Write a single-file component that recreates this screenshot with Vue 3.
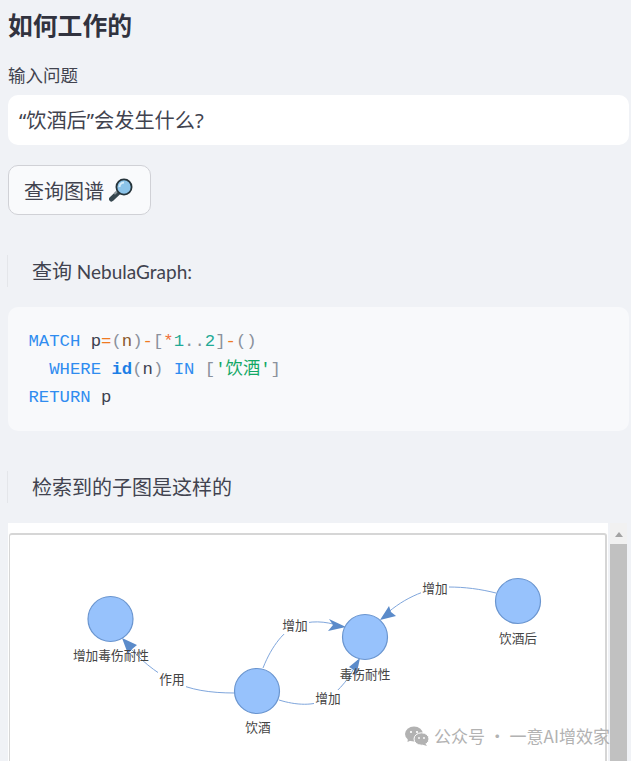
<template>
  <div class="page">
    <h2 class="title">如何工作的</h2>
    <label class="field-label">输入问题</label>
    <div class="input">“饮酒后”会发生什么?</div>
    <button class="query-btn">
      <span>查询图谱</span>
      <svg class="lens" width="24" height="24" viewBox="0 0 24 24">
        <path d="M11 13 L2.5 21" stroke="#37474f" stroke-width="5" stroke-linecap="round" />
        <path d="M9.5 12 L6 15.5" stroke="#8a9499" stroke-width="2" stroke-linecap="round" />
        <circle cx="15" cy="9" r="7.6" fill="#8cc4ea" stroke="#26343b" stroke-width="1.8" />
        <path d="M10.5 9 A4.6 4.6 0 0 1 15 4.5" fill="none" stroke="#d5ecfa" stroke-width="2" />
      </svg>
    </button>

    <blockquote class="quote first"><span class="big">查询</span> NebulaGraph:</blockquote>

    <pre class="code"><code><span class="kw">MATCH</span> <span class="id">p</span><span class="op">=</span><span class="pn">(</span><span class="id2">n</span><span class="pn">)</span><span class="op">-</span><span class="pn">[</span><span class="star">*</span><span class="num">1</span><span class="pn">..</span><span class="num">2</span><span class="pn">]</span><span class="op">-</span><span class="pn">()</span>
  <span class="kw">WHERE</span> <span class="fn">id</span><span class="pn">(</span><span class="id">n</span><span class="pn">)</span> <span class="kw">IN</span> <span class="pn">[</span><span class="str">'饮酒'</span><span class="pn">]</span>
<span class="kw">RETURN</span> <span class="id">p</span></code></pre>

    <blockquote class="quote second">检索到的子图是这样的</blockquote>

    <div class="frame">
      <div class="graph-wrap">
        <div class="graph-box">
          <svg class="graph" width="598" height="240" viewBox="9 534 598 240">
            <g fill="none" stroke="#7fa6dc" stroke-width="1">
              <path d="M235 693 C210 693 190 690 172 681 C155 672 140 660 125 642" />
              <path d="M263 668 C272 645 285 630 296 626 C310 620 325 621 340 626" />
              <path d="M279 700 C295 705 315 707 328 698 C340 690 350 678 358 660" />
              <path d="M496 593 C480 589 465 587 448 587 C425 588 400 600 382 618" />
            </g>
            <g fill="#5b8bca">
              <polygon points="122,638 137,645 131,650 128,654" />
              <polygon points="346,627 329,619 333,625 328,631" />
              <polygon points="360,658 349,667 354,670 356,677" />
              <polygon points="380,620 389,606 391,612 396,616" />
            </g>
            <g fill="#97c2fc" stroke="#6a95cf" stroke-width="1.2">
              <circle cx="110.500" cy="619" r="22.500" />
              <circle cx="257" cy="691" r="22.500" />
              <circle cx="365" cy="637" r="22.500" />
              <circle cx="518" cy="601" r="22.500" />
            </g>
            <g class="node-text" text-anchor="middle">
              <text x="111" y="660">增加毒伤耐性</text>
              <text x="258" y="732">饮酒</text>
              <text x="365" y="679">毒伤耐性</text>
              <text x="518" y="643">饮酒后</text>
            </g>
            <g class="edge-text" text-anchor="middle">
              <rect x="158" y="672" width="28" height="16" fill="#fff" />
              <text x="172" y="684">作用</text>
              <rect x="281" y="618" width="28" height="16" fill="#fff" />
              <text x="295" y="630">增加</text>
              <rect x="314" y="690" width="28" height="16" fill="#fff" />
              <text x="328" y="703">增加</text>
              <rect x="421" y="580" width="28" height="16" fill="#fff" />
              <text x="435" y="593">增加</text>
            </g>
          </svg>
        </div>
      </div>
      <div class="scrollbar">
        <div class="arrow"></div>
        <div class="thumb"></div>
      </div>
    </div>

    <div class="watermark">
      <svg width="24" height="20" viewBox="0 0 24 20">
        <ellipse cx="9" cy="8" rx="9" ry="7.500" fill="#b2b2b2" />
        <path d="M3 12 L2.500 16 L7 14z" fill="#b2b2b2" />
        <ellipse cx="16.500" cy="13" rx="7.500" ry="6.200" fill="#b2b2b2" stroke="#fff" stroke-width="1" />
        <path d="M20 17 L22 20 L17 18.500z" fill="#b2b2b2" />
        <circle cx="6" cy="6" r="1.100" fill="#fff" />
        <circle cx="12" cy="6" r="1.100" fill="#fff" />
        <circle cx="14" cy="12" r="0.900" fill="#fff" />
        <circle cx="19" cy="12" r="0.900" fill="#fff" />
      </svg>
      <span>公众号 · 一意AI增效家</span>
    </div>
  </div>
</template>

<script setup>
</script>

<style>
html, body {
  margin: 0;
  background: #f0f2f6;
}
</style>

<style scoped>
.page {
  position: relative;
  height: 761px;
  overflow: hidden;
  box-sizing: border-box;
  padding: 6px 2px 0 8px;
  background: #f0f2f6;
  color: #41434f;
  font-family: "Noto Sans", "Noto Sans CJK SC", sans-serif;
}

.title {
  margin: 0;
  font-size: 24.800px;
  line-height: 36px;
  font-weight: 700;
  color: #31333f;
  font-family: "Noto Sans CJK SC", sans-serif;
}

.field-label {
  display: block;
  margin-top: 20px;
  font-size: 17.500px;
  line-height: 26px;
  font-family: "Noto Sans CJK SC", sans-serif;
}

.input {
  box-sizing: border-box;
  height: 50px;
  margin-top: 7px;
  padding: 0 11px;
  line-height: 50px;
  background: #fff;
  border-radius: 10px;
  font-size: 20.200px;
}

.query-btn {
  display: flex;
  align-items: center;
  gap: 5px;
  box-sizing: border-box;
  width: 143px;
  height: 50px;
  margin-top: 20px;
  padding: 0 0 0 15px;
  background: #f9fafc;
  border: 1px solid #d0d1d6;
  border-radius: 10px;
  color: #41434f;
  font-family: "Noto Sans CJK SC", sans-serif;
  font-size: 20px;
}

.lens {
  flex: none;
}

.quote {
  margin: 0;
  box-sizing: border-box;
  margin-left: -1px;
  height: 32px;
  padding-left: 24px;
  border-left: 1px solid #e4e6ea;
  line-height: 32px;
  font-family: Lato, "Noto Sans CJK SC", sans-serif;
  font-size: 19px;
}

.quote .big {
  font-size: 20px;
}

.quote.first {
  margin-top: 40px;
}

.quote.second {
  margin-top: 40px;
  font-size: 20px;
  font-family: "Noto Sans CJK SC", sans-serif;
}

.code {
  box-sizing: border-box;
  height: 124px;
  margin: 20px 0 0;
  padding: 21px 21px 19px 20.500px;
  background: #f8f9fb;
  border-radius: 10px;
  font-family: "Liberation Mono", "Noto Sans CJK SC", monospace;
  font-size: 17.300px;
  line-height: 28px;
  color: #31333f;
}

.code code {
  font-family: inherit;
}

.kw {
  color: #2f8cf0;
}

.id {
  color: #3d4150;
}

.id2 {
  color: #8a5a2c;
}

.op {
  color: #ef7a22;
}

.pn {
  color: #8b919c;
}

.star {
  color: #f0703a;
}

.num {
  color: #1faa96;
}

.fn {
  color: #1c7fe6;
  font-weight: 700;
}

.str {
  color: #12a866;
}

.frame {
  display: flex;
  height: 300px;
  margin-top: 20px;
}

.graph-wrap {
  box-sizing: border-box;
  width: 600px;
  padding: 10px 1px 0;
  background: #fff;
}

.graph-box {
  box-sizing: border-box;
  height: 280px;
  border: 1px solid #d6d6d6;
  border-top-width: 2px;
  border-right-width: 2px;
  border-radius: 3px;
}

.graph {
  display: block;
  margin-top: -1px;
  margin-left: -1px;
}

.node-text text,
.edge-text text {
  font-family: "Noto Sans CJK SC", sans-serif;
  font-size: 12.700px;
  fill: #444;
}

.scrollbar {
  width: 17px;
  margin-left: 2px;
  background: #f1f1f1;
}

.arrow {
  width: 0;
  height: 0;
  margin: 9px auto 7px;
  border-left: 4.500px solid transparent;
  border-right: 4.500px solid transparent;
  border-bottom: 5px solid #a3a3a3;
}

.thumb {
  height: 260px;
  background: #c1c1c1;
}

.watermark {
  position: absolute;
  left: 405px;
  top: 725px;
  display: flex;
  align-items: center;
  gap: 5px;
  font-family: "Noto Sans CJK SC", sans-serif;
  font-size: 17px;
  line-height: 22px;
  color: #b2b2b2;
}
</style>
